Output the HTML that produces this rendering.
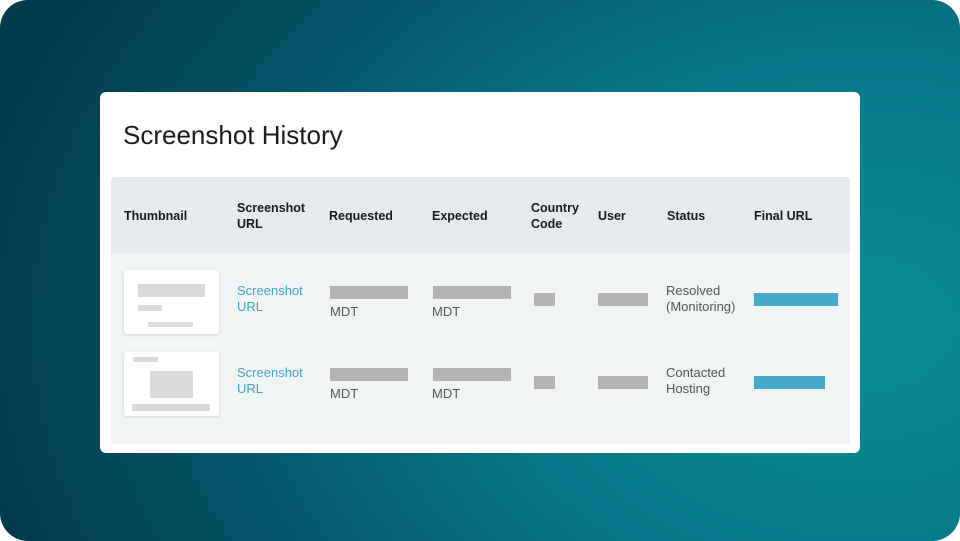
<!DOCTYPE html>
<html><head><style>
*{margin:0;padding:0;box-sizing:border-box}
html,body{width:960px;height:541px;background:#fff;overflow:hidden}
.bg{position:absolute;left:0;top:0;width:960px;height:541px;border-radius:28px;
background:radial-gradient(ellipse 900px 650px at 90% 60%,#0a8e94 0%,#07798a 40%,#055266 75%,#043a4e 100%);}
.card{position:absolute;left:100px;top:92px;width:760px;height:361px;background:#fff;border-radius:6px}
.title{position:absolute;left:123px;top:120px;font:26px "Liberation Sans",sans-serif;color:#1c1c1c}
.hd{position:absolute;left:111px;top:177px;width:739px;height:76px;background:#e5eaed;border-radius:4px 4px 0 0}
.bd{position:absolute;left:111px;top:253px;width:739px;height:191px;background:#f0f4f5}
.h{position:absolute;font:bold 12.5px/16px "Liberation Sans",sans-serif;color:#1a1a1a}
.t{position:absolute;font:13px/16px "Liberation Sans",sans-serif;color:#555}
.l{color:#44a3c3}
.g{position:absolute;background:#b4b4b4;height:13px}
.b{position:absolute;background:#45a9c8;height:13px}
.th{position:absolute;left:124px;width:95px;height:64px;background:#fff;border-radius:3px;box-shadow:0 1px 3px rgba(0,0,0,.15)}
.s{position:absolute;background:#dadada}
</style></head><body>
<div class="bg"></div>
<div class="card"></div>
<div class="title">Screenshot History</div>
<div class="hd"></div><div class="bd"></div>
<div class="h" style="left:124px;top:208px">Thumbnail</div>
<div class="h" style="left:237px;top:200px">Screenshot<br>URL</div>
<div class="h" style="left:329px;top:208px">Requested</div>
<div class="h" style="left:432px;top:208px">Expected</div>
<div class="h" style="left:531px;top:200px">Country<br>Code</div>
<div class="h" style="left:598px;top:208px">User</div>
<div class="h" style="left:667px;top:208px">Status</div>
<div class="h" style="left:754px;top:208px">Final URL</div>

<div class="th" style="top:270px"></div>
<div class="s" style="left:138px;top:284px;width:67px;height:13px"></div>
<div class="s" style="left:138px;top:305px;width:24px;height:6px"></div>
<div class="s" style="left:148px;top:322px;width:45px;height:5px"></div>
<div class="th" style="top:352px"></div>
<div class="s" style="left:133px;top:357px;width:25px;height:5px"></div>
<div class="s" style="left:150px;top:371px;width:43px;height:27px"></div>
<div class="s" style="left:132px;top:404px;width:78px;height:7px"></div>

<div class="t l" style="left:237px;top:283px">Screenshot<br>URL</div>
<div class="t l" style="left:237px;top:365px">Screenshot<br>URL</div>
<div class="g" style="left:330px;top:286px;width:78px"></div>
<div class="g" style="left:433px;top:286px;width:78px"></div>
<div class="g" style="left:330px;top:368px;width:78px"></div>
<div class="g" style="left:433px;top:368px;width:78px"></div>
<div class="t" style="left:330px;top:304px">MDT</div>
<div class="t" style="left:432px;top:304px">MDT</div>
<div class="t" style="left:330px;top:386px">MDT</div>
<div class="t" style="left:432px;top:386px">MDT</div>
<div class="g" style="left:534px;top:293px;width:21px"></div>
<div class="g" style="left:598px;top:293px;width:50px"></div>
<div class="g" style="left:534px;top:376px;width:21px"></div>
<div class="g" style="left:598px;top:376px;width:50px"></div>
<div class="t" style="left:666px;top:283px">Resolved<br>(Monitoring)</div>
<div class="t" style="left:666px;top:365px">Contacted<br>Hosting</div>
<div class="b" style="left:754px;top:293px;width:84px"></div>
<div class="b" style="left:754px;top:376px;width:71px"></div>
</body></html>
